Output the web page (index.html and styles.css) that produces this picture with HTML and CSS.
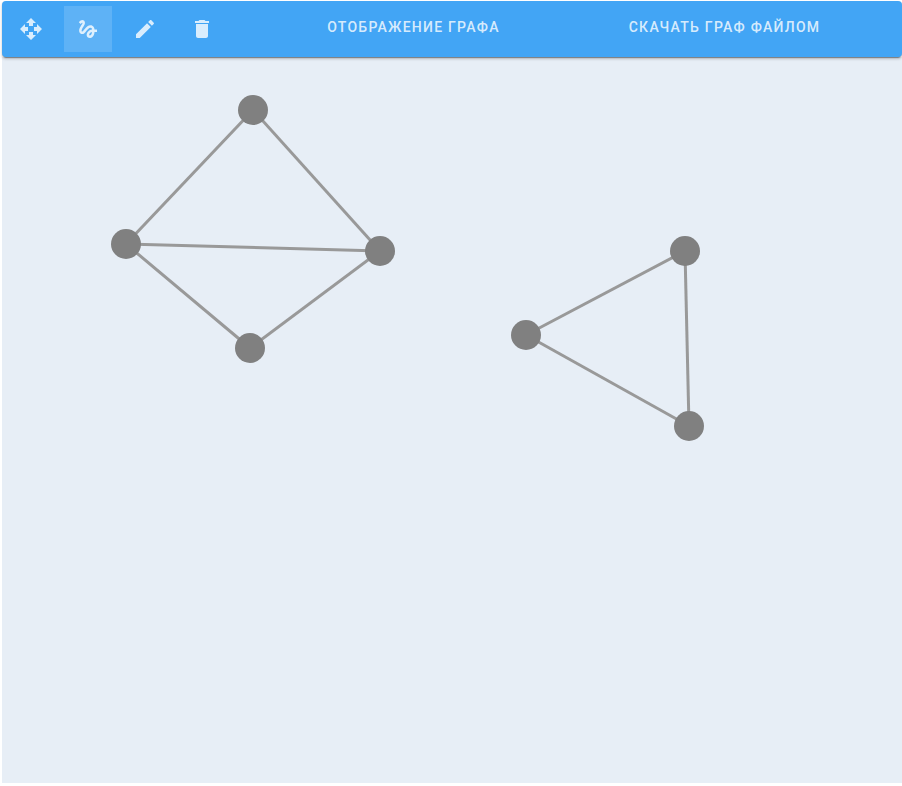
FILE: index.html
```html
<!DOCTYPE html>
<html lang="ru">
<head>
<meta charset="utf-8">
<meta name="viewport" content="width=device-width, initial-scale=1">
<title>Граф</title>
<link rel="stylesheet" href="styles.css">
</head>
<body>
<div class="editor">
  <header class="toolbar">
    <div class="tools">
      <button class="tool" type="button" aria-label="Переместить">
        <svg class="icon" viewBox="0 0 24 24"><path d="M10 9h4V6h3l-5-5-5 5h3v3zm-1 1H6V7l-5 5 5 5v-3h3v-4zm14 2l-5-5v3h-3v4h3v3l5-5zm-9 3h-4v3H7l5 5 5-5h-3v-3z"/></svg>
      </button>
      <button class="tool tool-active" type="button" aria-label="Рисовать" aria-pressed="true">
        <svg class="icon" viewBox="0 0 24 24"><path d="M4.59 6.89c.7-.71 1.4-1.35 1.71-1.22.5.2 0 1.03-.3 1.52-.25.42-2.86 3.89-2.86 6.31 0 1.28.48 2.34 1.34 2.98.75.56 1.74.73 2.64.46 1.07-.31 1.95-1.4 3.06-2.77 1.21-1.49 2.83-3.44 4.08-3.44 1.63 0 1.65 1.01 1.76 1.79-3.78.64-5.38 3.67-5.38 5.37 0 1.7 1.44 3.09 3.21 3.09 1.63 0 4.29-1.33 4.69-6.1H21v-2.5h-2.47c-.15-1.65-1.09-4.2-4.03-4.2-2.25 0-4.18 1.91-4.94 2.84-.58.73-2.06 2.48-2.29 2.72-.25.3-.68.84-1.11.84-.45 0-.72-.83-.36-1.92.35-1.09 1.4-2.86 1.85-3.52.78-1.14 1.3-1.92 1.3-3.28C8.95 3.69 7.31 3 6.44 3 5.12 3 3.97 4 3.72 4.25c-.36.36-.66.66-.88.93l1.75 1.71zm9.29 11.66c-.31 0-.74-.26-.74-.72 0-.6.73-2.2 2.87-2.76-.3 2.69-1.43 3.48-2.13 3.48z"/></svg>
      </button>
      <button class="tool" type="button" aria-label="Изменить">
        <svg class="icon" viewBox="0 0 24 24"><path d="M3 17.25V21h3.75L17.81 9.94l-3.75-3.75L3 17.25zM20.71 7.04c.39-.39.39-1.02 0-1.41l-2.34-2.34c-.39-.39-1.02-.39-1.41 0l-1.83 1.83 3.75 3.75 1.83-1.83z"/></svg>
      </button>
      <button class="tool" type="button" aria-label="Удалить">
        <svg class="icon" viewBox="0 0 24 24"><path d="M6 19c0 1.1.9 2 2 2h8c1.1 0 2-.9 2-2V7H6v12zM19 4h-3.5l-1-1h-5l-1 1H5v2h14V4z"/></svg>
      </button>
    </div>
    <nav class="tabs">
      <button class="tab" type="button">Отображение графа</button>
      <button class="tab" type="button">Скачать граф файлом</button>
    </nav>
  </header>
  <main class="board">
    <svg class="graph" width="900" height="725" viewBox="2 57 900 725" role="img" aria-label="Граф">
      <g class="edges">
        <line x1="253" y1="110" x2="126" y2="244"/>
        <line x1="253" y1="110" x2="380" y2="251"/>
        <line x1="126" y1="244" x2="380" y2="251"/>
        <line x1="126" y1="244" x2="250" y2="348"/>
        <line x1="380" y1="251" x2="250" y2="348"/>
        <line x1="526" y1="335" x2="685" y2="251"/>
        <line x1="685" y1="251" x2="689" y2="426"/>
        <line x1="526" y1="335" x2="689" y2="426"/>
      </g>
      <g class="nodes">
        <circle cx="253" cy="110" r="15"/>
        <circle cx="126" cy="244" r="15"/>
        <circle cx="380" cy="251" r="15"/>
        <circle cx="250" cy="348" r="15"/>
        <circle cx="526" cy="335" r="15"/>
        <circle cx="685" cy="251" r="15"/>
        <circle cx="689" cy="426" r="15"/>
      </g>
    </svg>
  </main>
</div>
</body>
</html>
```
FILE: styles.css
```css
* {
  box-sizing: border-box;
}

body {
  margin: 0;
  background: #fff;
  font-family: Roboto, sans-serif;
}

.editor {
  display: flex;
  flex-direction: column;
  min-height: 100vh;
  padding: 1px 0 3px 2px;
}

.toolbar {
  position: relative;
  display: flex;
  padding: 5px 22px 5px 5px;
  border-radius: 4px;
  background: #42a5f5;
  box-shadow: 0 3px 1px -2px rgba(0, 0, 0, 0.25), 0 1px 1px 0 rgba(0, 0, 0, 0.15), 0 2px 3px 0 rgba(0, 0, 0, 0.2);
}

.tools {
  display: flex;
  gap: 9px;
  margin-right: 32px;
}

.tool {
  display: flex;
  align-items: center;
  justify-content: center;
  width: 48px;
  height: 46px;
  padding: 0;
  border: 0;
  background: transparent;
  color: rgba(255, 255, 255, 0.8);
  cursor: pointer;
}

.tool-active {
  background: rgba(255, 255, 255, 0.15);
}

.icon {
  width: 24px;
  height: 24px;
  fill: currentColor;
}

.tabs {
  display: grid;
  flex: 1;
  grid-template-columns: 1fr 1fr;
}

.tab {
  height: 42px;
  padding: 0;
  border: 0;
  background: transparent;
  color: rgba(255, 255, 255, 0.8);
  font: 500 14px/20px Roboto, sans-serif;
  letter-spacing: 0.089em;
  text-transform: uppercase;
  cursor: pointer;
}

.board {
  flex: 1;
  overflow: hidden;
  background: #e7eef6;
}

.graph {
  display: block;
}

.edges {
  stroke: #999;
  stroke-width: 3;
}

.nodes {
  fill: #808080;
}
```
